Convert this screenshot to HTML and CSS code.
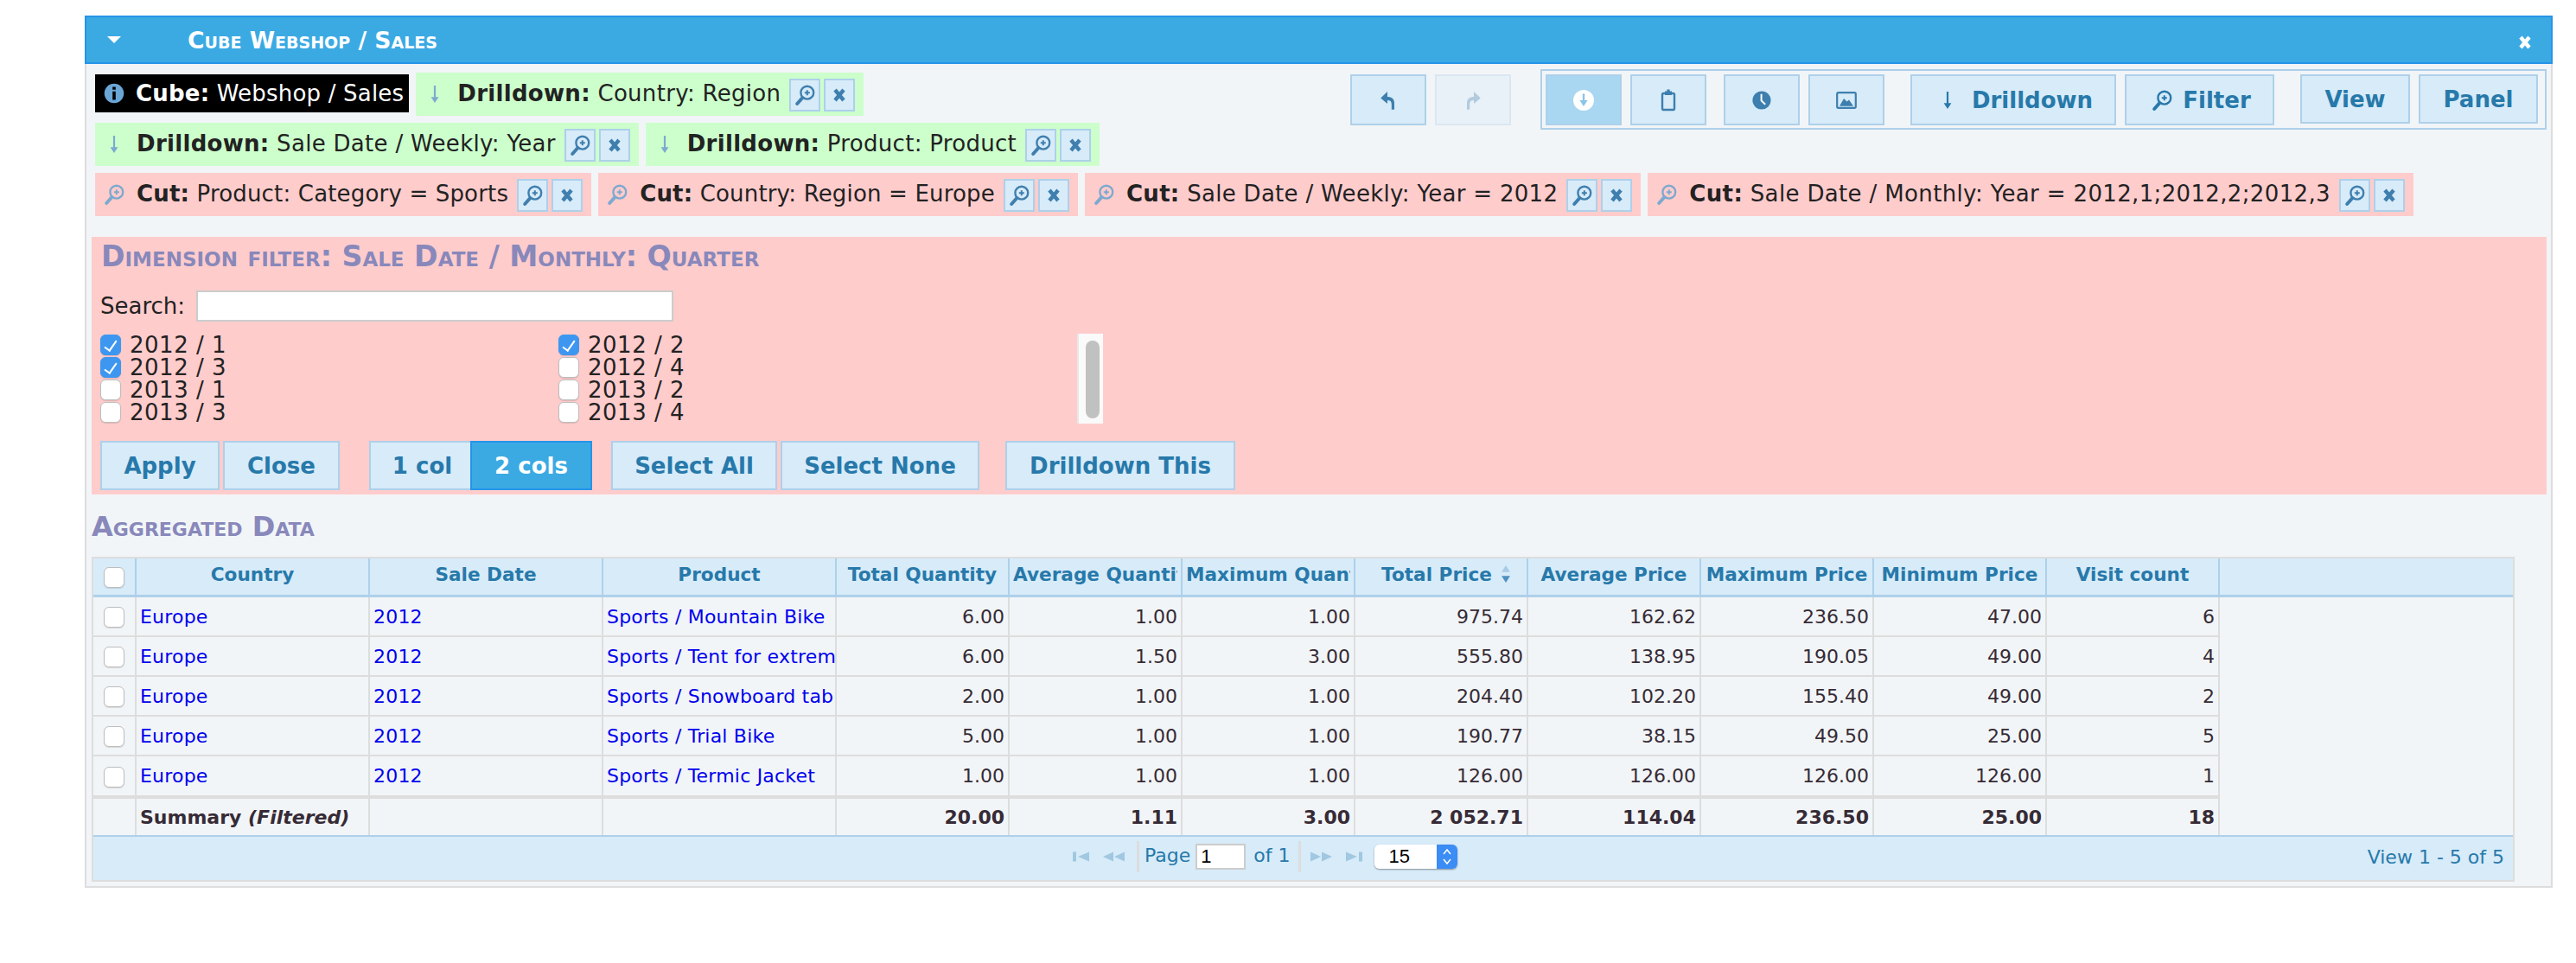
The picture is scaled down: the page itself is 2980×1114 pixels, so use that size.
FILE: index.html
```html
<!DOCTYPE html>
<html lang="en">
<head>
  <meta charset="UTF-8">
  <title>Cube Webshop / Sales</title>
  <link rel="stylesheet" href="styles.css">
</head>
<body>
  <!-- icon set -->
  <svg class="icon-defs" xmlns="http://www.w3.org/2000/svg">
    <symbol id="i-zoom" viewBox="0 0 16 16">
      <circle cx="9.4" cy="6.6" r="3.7" fill="none" stroke="currentColor" stroke-width="1.2"/>
      <path d="M7.9 6.6h3M9.4 5.1v3" stroke="currentColor" stroke-width="1"/>
      <path d="M6.6 9.6 3.6 13" stroke="currentColor" stroke-width="2" stroke-linecap="round"/>
    </symbol>
    <symbol id="i-close" viewBox="0 0 16 16">
      <path d="M5.5 5 10.5 11M10.5 5 5.5 11" stroke="currentColor" stroke-width="2.2" fill="none"/>
    </symbol>
    <symbol id="i-down" viewBox="0 0 16 16">
      <path d="M8 3v8" stroke="currentColor" stroke-width="1.1"/>
      <path d="M5.8 9.6h4.4L8 13z" fill="currentColor"/>
    </symbol>
    <symbol id="i-caret" viewBox="0 0 16 16">
      <path d="M4 6h8l-4 4z" fill="currentColor"/>
    </symbol>
    <symbol id="i-undo" viewBox="0 0 16 16">
      <path d="M7.5 3 3.6 6.8l3.900 3.200V8c1.600 0 2.400.7 2.400 2.200v3.200h1.600V9.600c0-2.400-1.600-3.600-4-3.600z" fill="currentColor"/>
    </symbol>
    <symbol id="i-redo" viewBox="0 0 16 16">
      <path d="M8.500 3l3.900 3.800L8.500 10V8c-1.600 0-2.400.7-2.400 2.200v3.200H4.500V9.600C4.500 7.200 6.100 6 8.500 6z" fill="currentColor"/>
    </symbol>
    <symbol id="i-circle-down" viewBox="0 0 16 16">
      <circle cx="8" cy="8" r="6" fill="#fff"/>
      <path d="M8 4.200v5" stroke="#8cc4e8" stroke-width="1.2"/>
      <path d="M5.700 8h4.600L8 11.500z" fill="#8cc4e8"/>
    </symbol>
    <symbol id="i-clipboard" viewBox="0 0 16 16">
      <rect x="4.500" y="4" width="7" height="9.500" rx=".8" fill="none" stroke="currentColor" stroke-width="1.200"/>
      <path d="M6 2.800h1.200V1.800h1.600v1H10V5H6z" fill="currentColor"/>
    </symbol>
    <symbol id="i-clock" viewBox="0 0 16 16">
      <circle cx="8" cy="8" r="5.300" fill="currentColor"/>
      <path d="M7.800 4.400v3.800l2.300 2.200" stroke="#fff" stroke-width="1" fill="none"/>
    </symbol>
    <symbol id="i-image" viewBox="0 0 16 16">
      <rect x="2.600" y="3.600" width="10.800" height="8.800" rx=".8" fill="none" stroke="currentColor" stroke-width="1.100"/>
      <path d="M4 11.400 6.500 7l1.800 1.800 1.200-1 2.500 3.600z" fill="currentColor"/>
    </symbol>
    <symbol id="i-first" viewBox="0 0 16 16">
      <path d="M3.500 5.200h2v5.600h-2zM13 5.200v5.600L6.500 8z" fill="currentColor"/>
    </symbol>
    <symbol id="i-prev" viewBox="0 0 16 16">
      <path d="M8 5.200v5.600L2 8zM14.500 5.200v5.600L8.500 8z" fill="currentColor"/>
    </symbol>
    <symbol id="i-next" viewBox="0 0 16 16">
      <path d="M1.500 5.200v5.600L7.500 8zM8 5.200v5.600L14 8z" fill="currentColor"/>
    </symbol>
    <symbol id="i-last" viewBox="0 0 16 16">
      <path d="M3 5.200v5.600L9.500 8zM10.500 5.200h2v5.600h-2z" fill="currentColor"/>
    </symbol>
  </svg>

  <div class="panel">
    <div class="panel-header">
      <svg class="icon header-caret"><use href="#i-caret"/></svg>
      <span class="panel-title">Cube Webshop / Sales</span>
      <svg class="icon header-close"><use href="#i-close"/></svg>
    </div>

    <div class="panel-body">
      <div class="top">
        <div class="chip-rows">
          <div class="chip-row">
            <div class="chip chip-cube">
              <svg class="info-icon" viewBox="0 0 16 16"><circle cx="8" cy="8" r="7.500" fill="#6aa6d6"/><path d="M6.800 3h2.400v2.200H6.800zM6.800 6.500h2.400v6.500H6.800z" fill="#000"/></svg>
              <span class="chip-label"><b>Cube:</b> Webshop / Sales</span>
            </div>
            <div class="chip chip-drill">
              <svg class="icon chip-icon"><use href="#i-down"/></svg>
              <span class="chip-text"><b>Drilldown:</b> Country: Region</span>
              <button class="mini-btn"><svg class="icon"><use href="#i-zoom"/></svg></button>
              <button class="mini-btn"><svg class="icon"><use href="#i-close"/></svg></button>
            </div>
          </div>
          <div class="chip-row">
            <div class="chip chip-drill">
              <svg class="icon chip-icon"><use href="#i-down"/></svg>
              <span class="chip-text"><b>Drilldown:</b> Sale Date / Weekly: Year</span>
              <button class="mini-btn"><svg class="icon"><use href="#i-zoom"/></svg></button>
              <button class="mini-btn"><svg class="icon"><use href="#i-close"/></svg></button>
            </div>
            <div class="chip chip-drill">
              <svg class="icon chip-icon"><use href="#i-down"/></svg>
              <span class="chip-text"><b>Drilldown:</b> Product: Product</span>
              <button class="mini-btn"><svg class="icon"><use href="#i-zoom"/></svg></button>
              <button class="mini-btn"><svg class="icon"><use href="#i-close"/></svg></button>
            </div>
          </div>
        </div>

        <div class="actions">
          <div class="history">
            <button class="btn btn-icon"><svg class="icon"><use href="#i-undo"/></svg></button>
            <button class="btn btn-icon btn-disabled"><svg class="icon"><use href="#i-redo"/></svg></button>
          </div>
          <div class="toolbar">
            <div class="tool-set">
              <button class="btn btn-icon btn-pressed"><svg class="icon"><use href="#i-circle-down"/></svg></button>
              <button class="btn btn-icon"><svg class="icon"><use href="#i-clipboard"/></svg></button>
            </div>
            <div class="tool-set">
              <button class="btn btn-icon"><svg class="icon"><use href="#i-clock"/></svg></button>
              <button class="btn btn-icon"><svg class="icon"><use href="#i-image"/></svg></button>
            </div>
            <div class="tool-set">
              <button class="btn btn-tool btn-drill"><svg class="icon"><use href="#i-down"/></svg>Drilldown</button>
              <button class="btn btn-tool btn-filter"><svg class="icon"><use href="#i-zoom"/></svg>Filter</button>
            </div>
            <div class="tool-set">
              <button class="btn btn-short btn-view">View</button>
              <button class="btn btn-short btn-panel">Panel</button>
            </div>
          </div>
        </div>
      </div>

      <div class="chip-row cuts">
        <div class="chip chip-cut">
          <svg class="icon chip-icon"><use href="#i-zoom"/></svg>
          <span class="chip-text"><b>Cut:</b> Product: Category = Sports</span>
          <button class="mini-btn"><svg class="icon"><use href="#i-zoom"/></svg></button>
          <button class="mini-btn"><svg class="icon"><use href="#i-close"/></svg></button>
        </div>
        <div class="chip chip-cut">
          <svg class="icon chip-icon"><use href="#i-zoom"/></svg>
          <span class="chip-text"><b>Cut:</b> Country: Region = Europe</span>
          <button class="mini-btn"><svg class="icon"><use href="#i-zoom"/></svg></button>
          <button class="mini-btn"><svg class="icon"><use href="#i-close"/></svg></button>
        </div>
        <div class="chip chip-cut">
          <svg class="icon chip-icon"><use href="#i-zoom"/></svg>
          <span class="chip-text chip-text-wide"><b>Cut:</b> Sale Date / Weekly: Year = 2012</span>
          <button class="mini-btn"><svg class="icon"><use href="#i-zoom"/></svg></button>
          <button class="mini-btn"><svg class="icon"><use href="#i-close"/></svg></button>
        </div>
        <div class="chip chip-cut">
          <svg class="icon chip-icon"><use href="#i-zoom"/></svg>
          <span class="chip-text chip-text-long"><b>Cut:</b> Sale Date / Monthly: Year = 2012,1;2012,2;2012,3</span>
          <button class="mini-btn"><svg class="icon"><use href="#i-zoom"/></svg></button>
          <button class="mini-btn"><svg class="icon"><use href="#i-close"/></svg></button>
        </div>
      </div>

      <div class="dim-filter">
        <h3 class="section-title filter-title">Dimension filter: Sale Date / Monthly: Quarter</h3>
        <div class="search-row">
          <label for="dimSearch">Search:</label>
          <input id="dimSearch" class="search-input" type="text">
        </div>
        <div class="value-list">
          <div class="value-grid">
            <label class="value"><input type="checkbox" class="check" checked>2012 / 1</label>
            <label class="value"><input type="checkbox" class="check" checked>2012 / 2</label>
            <label class="value"><input type="checkbox" class="check" checked>2012 / 3</label>
            <label class="value"><input type="checkbox" class="check">2012 / 4</label>
            <label class="value"><input type="checkbox" class="check">2013 / 1</label>
            <label class="value"><input type="checkbox" class="check">2013 / 2</label>
            <label class="value"><input type="checkbox" class="check">2013 / 3</label>
            <label class="value"><input type="checkbox" class="check">2013 / 4</label>
          </div>
          <div class="scrollbar"><div class="scroll-thumb"></div></div>
        </div>
        <div class="filter-actions">
          <button class="btn btn-form btn-apply">Apply</button>
          <button class="btn btn-form btn-close">Close</button>
          <div class="col-switch">
            <button class="btn btn-form btn-col1">1 col</button>
            <button class="btn btn-form btn-col2 btn-active">2 cols</button>
          </div>
          <button class="btn btn-form btn-all">Select All</button>
          <button class="btn btn-form btn-none">Select None</button>
          <button class="btn btn-form btn-this">Drilldown This</button>
        </div>
      </div>

      <h3 class="section-title data-title">Aggregated Data</h3>

      <div class="grid">
        <table class="grid-table">
          <colgroup>
            <col class="col-check"><col class="col-dim"><col class="col-dim"><col class="col-dim">
            <col class="col-num"><col class="col-num"><col class="col-num"><col class="col-num">
            <col class="col-num"><col class="col-num"><col class="col-num"><col class="col-num">
            <col>
          </colgroup>
          <thead>
            <tr>
              <th><input type="checkbox" class="check"></th>
              <th><div class="th-text">Country</div></th>
              <th><div class="th-text">Sale Date</div></th>
              <th><div class="th-text">Product</div></th>
              <th><div class="th-text">Total Quantity</div></th>
              <th><div class="th-text">Average Quantity</div></th>
              <th><div class="th-text">Maximum Quantity</div></th>
              <th><div class="th-text th-sorted">Total Price
                <svg class="sort-icon" viewBox="0 0 12 20"><path d="M6 1l4.500 7h-9z" fill="#a9cbe6"/><path d="M6 19l4.500-7h-9z" fill="#4f8fc0"/></svg></div></th>
              <th><div class="th-text">Average Price</div></th>
              <th><div class="th-text">Maximum Price</div></th>
              <th><div class="th-text">Minimum Price</div></th>
              <th><div class="th-text">Visit count</div></th>
              <th class="filler-head"></th>
            </tr>
          </thead>
          <tbody>
            <tr>
              <td class="cell-check"><input type="checkbox" class="check"></td>
              <td><a href="#">Europe</a></td><td><a href="#">2012</a></td><td><a href="#">Sports / Mountain Bike</a></td>
              <td class="num">6.00</td><td class="num">1.00</td><td class="num">1.00</td><td class="num">975.74</td>
              <td class="num">162.62</td><td class="num">236.50</td><td class="num">47.00</td><td class="num">6</td>
              <td class="filler" rowspan="6"></td>
            </tr>
            <tr>
              <td class="cell-check"><input type="checkbox" class="check"></td>
              <td><a href="#">Europe</a></td><td><a href="#">2012</a></td><td><a href="#">Sports / Tent for extreme weather</a></td>
              <td class="num">6.00</td><td class="num">1.50</td><td class="num">3.00</td><td class="num">555.80</td>
              <td class="num">138.95</td><td class="num">190.05</td><td class="num">49.00</td><td class="num">4</td>
            </tr>
            <tr>
              <td class="cell-check"><input type="checkbox" class="check"></td>
              <td><a href="#">Europe</a></td><td><a href="#">2012</a></td><td><a href="#">Sports / Snowboard table</a></td>
              <td class="num">2.00</td><td class="num">1.00</td><td class="num">1.00</td><td class="num">204.40</td>
              <td class="num">102.20</td><td class="num">155.40</td><td class="num">49.00</td><td class="num">2</td>
            </tr>
            <tr>
              <td class="cell-check"><input type="checkbox" class="check"></td>
              <td><a href="#">Europe</a></td><td><a href="#">2012</a></td><td><a href="#">Sports / Trial Bike</a></td>
              <td class="num">5.00</td><td class="num">1.00</td><td class="num">1.00</td><td class="num">190.77</td>
              <td class="num">38.15</td><td class="num">49.50</td><td class="num">25.00</td><td class="num">5</td>
            </tr>
            <tr class="row-last">
              <td class="cell-check"><input type="checkbox" class="check"></td>
              <td><a href="#">Europe</a></td><td><a href="#">2012</a></td><td><a href="#">Sports / Termic Jacket</a></td>
              <td class="num">1.00</td><td class="num">1.00</td><td class="num">1.00</td><td class="num">126.00</td>
              <td class="num">126.00</td><td class="num">126.00</td><td class="num">126.00</td><td class="num">1</td>
            </tr>
            <tr class="row-summary">
              <td></td>
              <td>Summary <i>(Filtered)</i></td><td></td><td></td>
              <td class="num">20.00</td><td class="num">1.11</td><td class="num">3.00</td><td class="num">2 052.71</td>
              <td class="num">114.04</td><td class="num">236.50</td><td class="num">25.00</td><td class="num">18</td>
            </tr>
          </tbody>
        </table>
        <div class="pager">
          <div class="pager-center">
            <svg class="icon pager-icon"><use href="#i-first"/></svg>
            <svg class="icon pager-icon"><use href="#i-prev"/></svg>
            <span class="pager-sep sep-left"></span>
            <span class="pager-text">Page</span>
            <input class="page-input" type="text" value="1">
            <span class="pager-text pager-of">of 1</span>
            <span class="pager-sep sep-right"></span>
            <svg class="icon pager-icon"><use href="#i-next"/></svg>
            <svg class="icon pager-icon"><use href="#i-last"/></svg>
            <div class="page-size">
              <span class="page-size-value">15</span>
              <span class="page-size-arrows">
                <svg viewBox="0 0 12 28" width="12" height="28"><path d="M2 11l4-5 4 5M2 17l4 5 4-5" fill="none" stroke="#fff" stroke-width="1.500"/></svg>
              </span>
            </div>
          </div>
          <span class="pager-info">View 1 - 5 of 5</span>
        </div>
      </div>
    </div>
  </div>
</body>
</html>
```

FILE: styles.css
```css
html, body {
  margin: 0;
  background-color: #fff;
}

body {
  font-family: "DejaVu Sans", Verdana, sans-serif;
  font-size: 26px;
  color: #222;
}

.icon-defs {
  display: none;
}

.icon {
  width: 32px;
  height: 32px;
  flex: none;
}

/* Panel */
.panel {
  width: 2855px;
  height: 1009px;
  margin: 18px 0 0 98px;
  box-sizing: border-box;
  background-color: #f2f5f7;
  border: 2px solid #ddd;
  border-top: none;
}

.panel-header {
  display: flex;
  align-items: center;
  height: 56px;
  margin: 0 -2px;
  padding: 0 14px 0 16px;
  box-sizing: border-box;
  background-color: #3baae3;
  border: 2px solid #2694e8;
  color: #fff;
}

.panel-title {
  flex: 1;
  margin-left: 69px;
  font-size: 26.6px;
  font-weight: bold;
  font-variant: small-caps;
}

.header-close {
  margin-top: 6px;
}

.panel-body {
  padding: 6px 5px 0 6px;
}

.top {
  display: flex;
  justify-content: space-between;
}

/* Chips */
.chip-rows {
  display: flex;
  flex-direction: column;
  gap: 8px;
  margin: 4px 0 0 4px;
}

.chip-row {
  display: flex;
  align-items: flex-start;
  gap: 8px;
}

.cuts {
  margin: 8px 0 0 4px;
}

.chip {
  display: flex;
  align-items: center;
  height: 50px;
  padding: 0 10px 0 6px;
  box-sizing: border-box;
  white-space: nowrap;
}

.chip-drill {
  background-color: #ccffcc;
}

.chip-cut {
  background-color: #ffcccc;
}

.chip-cube {
  height: 44px;
  margin-top: 2px;
  padding: 0 6px 0 10px;
  background-color: #000;
  color: #fff;
}

.chip-label {
  letter-spacing: 0.2px;
}

.info-icon {
  width: 24px;
  height: 26px;
  margin-right: 13px;
}

.chip-icon {
  width: 32px;
  margin-right: 10px;
  color: #7ea9cf;
}

.chip-text {
  margin-right: 10px;
  margin-top: -2px;
  letter-spacing: 0.3px;
}

.chip-cut .chip-text {
  letter-spacing: 0.17px;
}

.chip-cut .chip-text-wide {
  letter-spacing: 0.3px;
}

.chip-cut .chip-text-long {
  letter-spacing: 0.35px;
}

.mini-btn {
  display: flex;
  width: 36px;
  height: 38px;
  margin-left: 4px;
  margin-top: 2px;
  padding: 0;
  align-items: center;
  justify-content: center;
  background-color: #d7ebf9;
  border: 2px solid #aed0ea;
  color: #3f7fae;
}

.chip-text + .mini-btn {
  margin-left: 0;
}

/* Buttons */
.btn {
  display: inline-flex;
  align-items: center;
  justify-content: center;
  margin: 0;
  padding: 0;
  box-sizing: border-box;
  font-family: inherit;
  font-size: 26px;
  font-weight: bold;
  color: #2779aa;
  background-color: #d7ebf9;
  border: 2px solid #aed0ea;
}

.btn-icon {
  width: 88px;
  height: 59px;
  color: #3d7fae;
}

.btn-pressed {
  background-color: #a9d6f0;
}

.btn-disabled {
  opacity: 0.35;
}

.btn-tool {
  height: 59px;
  gap: 12px;
}

.btn-short {
  height: 57px;
}

.btn-drill { width: 238px; }
.btn-filter { width: 173px; gap: 8px; }
.btn-view { width: 127px; }
.btn-panel { width: 138px; }

.actions {
  display: flex;
  align-items: flex-start;
  gap: 34px;
}

.history {
  display: flex;
  gap: 10px;
  margin-top: 6px;
}

.toolbar {
  display: flex;
  gap: 20px;
  width: 1164px;
  height: 70px;
  padding: 4px 8px 0 4px;
  box-sizing: border-box;
  border: 2px solid #aed0ea;
}

.tool-set {
  display: flex;
  align-items: flex-start;
  gap: 10px;
}

.tool-set + .tool-set + .tool-set {
  margin-left: 10px;
}

/* Dimension filter */
.dim-filter {
  margin-top: 24px;
  height: 298px;
  padding: 0 10px;
  box-sizing: border-box;
  background-color: #ffcccc;
}

.section-title {
  margin: 0;
  font-weight: bold;
  font-variant: small-caps;
  color: #8888bb;
}

.filter-title {
  height: 62px;
  margin-left: 1px;
  font-size: 33.2px;
  line-height: 46px;
}

.search-row {
  display: flex;
  align-items: center;
  gap: 13px;
  height: 36px;
}

.search-input {
  width: 552px;
  height: 36px;
  margin: 0;
  box-sizing: border-box;
  background-color: #fff;
  border: 2px solid #ccc;
}

.value-list {
  display: flex;
  margin-top: 14px;
}

.value-grid {
  display: grid;
  grid-template-columns: 530px 600px;
  grid-auto-rows: 26px;
}

.value {
  display: flex;
  align-items: center;
  gap: 10px;
  line-height: 26px;
  letter-spacing: 0.5px;
}

.check {
  appearance: none;
  position: relative;
  width: 24px;
  height: 24px;
  margin: 0;
  flex: none;
  box-sizing: border-box;
  background-color: #fff;
  border: 1px solid #bdbdbd;
  border-radius: 6px;
  box-shadow: 0 1px 1px rgba(0, 0, 0, 0.12);
}

.check:checked {
  background-color: #3d97f0;
  border-color: #3d97f0;
}

.check:checked::after {
  content: "";
  position: absolute;
  left: 7px;
  top: 3px;
  width: 6px;
  height: 13px;
  border: solid #fff;
  border-width: 0 2px 2px 0;
  transform: rotate(35deg);
}

.scrollbar {
  width: 30px;
  height: 104px;
  padding: 8px 6px 0 8px;
  box-sizing: border-box;
  background-color: #fafafa;
  border-left: 2px solid #e8e8e8;
}

.scroll-thumb {
  width: 16px;
  height: 90px;
  border-radius: 8px;
  background-color: #c1c1c1;
}

.filter-actions {
  display: flex;
  margin-top: 20px;
}

.btn-form {
  height: 57px;
  margin-right: 4px;
}

.btn-apply { width: 138px; }
.btn-close { width: 135px; margin-right: 34px; }
.btn-all { width: 192px; }
.btn-none { width: 230px; margin-right: 30px; }
.btn-this { width: 266px; }

.col-switch {
  display: flex;
  margin-right: 22px;
}

.col-switch .btn-form {
  margin-right: 0;
}

.btn-col1 { width: 117px; padding-left: 4px; border-right: none; }
.btn-col2 { width: 141px; }

.btn-active {
  color: #fff;
  background-color: #3baae3;
  border-color: #2694e8;
}

/* Data grid */
.data-title {
  height: 72px;
  font-size: 32px;
  line-height: 74px;
}

.grid {
  width: 2803px;
  box-sizing: border-box;
  border: 2px solid #ddd;
  font-size: 22px;
  color: #362b36;
}

.grid-table {
  width: 100%;
  table-layout: fixed;
  border-collapse: separate;
  border-spacing: 0;
}

.col-check { width: 50px; }
.col-dim { width: 270px; }
.col-num { width: 200px; }

.grid-table th {
  height: 45px;
  padding: 0 4px 6px;
  box-sizing: border-box;
  background-color: #d7ebf9;
  color: #2779aa;
  font-size: 21.6px;
  font-weight: bold;
  border-right: 2px solid #aed0ea;
  border-bottom: 3px solid #aed0ea;
}

.grid-table th:last-child {
  border-right: none;
}

.th-text {
  overflow: hidden;
  white-space: nowrap;
}

.th-sorted {
  display: flex;
  align-items: center;
  justify-content: center;
  gap: 8px;
  margin-left: 14px;
}

.sort-icon {
  width: 16px;
  height: 22px;
}

.grid-table td {
  height: 46px;
  padding: 0 4px;
  box-sizing: border-box;
  overflow: hidden;
  white-space: nowrap;
  border-right: 2px solid #ddd;
  border-bottom: 2px solid #ddd;
}

.grid-table td.num {
  text-align: right;
}

.grid-table td.filler {
  border: none;
}

.grid-table td.cell-check,
.grid-table th:first-child {
  padding: 0;
  text-align: center;
}

.cell-check .check,
th .check {
  vertical-align: middle;
}

.grid-table a {
  color: #0000ee;
  text-decoration: none;
  letter-spacing: 0.2px;
}

.row-last td {
  height: 49px;
  border-bottom-width: 4px;
}

.row-summary td {
  height: 42px;
  font-weight: bold;
  border-bottom: none;
}

.pager {
  display: flex;
  align-items: center;
  justify-content: space-between;
  height: 52px;
  padding: 0 10px 4px 1126px;
  box-sizing: border-box;
  background-color: #d7ebf9;
  border-top: 2px solid #aed0ea;
  color: #2779aa;
}

.pager-center {
  display: flex;
  align-items: center;
  height: 36px;
  gap: 6px;
}

.pager-text {
  margin-top: -4px;
}

.pager-of {
  margin-left: 3px;
}

.pager-icon {
  color: #2779aa;
  opacity: 0.3;
}

.pager-sep {
  width: 3px;
  height: 36px;
  background-color: #ddd;
}

.sep-left {
  margin-left: 5px;
}

.sep-right {
  margin: 0 2px 0 4px;
}

.page-input {
  width: 58px;
  height: 30px;
  padding: 0 0 0 4px;
  box-sizing: border-box;
  font-family: "Liberation Sans", sans-serif;
  font-size: 22px;
  background-color: #fff;
  border: 2px solid #ccc;
}

.page-size {
  display: flex;
  width: 96px;
  height: 28px;
  margin-left: 1px;
  overflow: hidden;
  border-radius: 6px;
  box-shadow: 0 1px 2px rgba(0, 0, 0, 0.4);
  font-family: "Liberation Sans", sans-serif;
  color: #000;
}

.page-size-value {
  flex: 1;
  padding-left: 16px;
  line-height: 28px;
  background-color: #fff;
}

.page-size-arrows {
  display: flex;
  width: 24px;
  justify-content: center;
  background-color: #3b8cf5;
}
```
